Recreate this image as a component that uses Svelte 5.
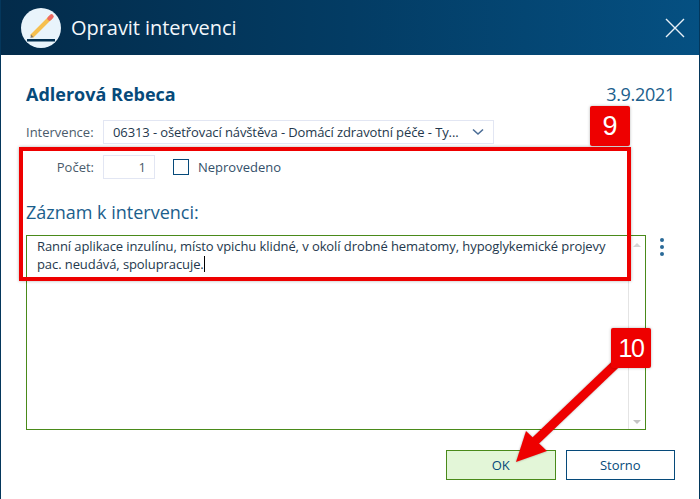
<script>
	// Form content
	const patient = 'Adlerová Rebeca';
	const date = '3.9.2021';
	const intervention = '06313 - ošetřovací návštěva - Domácí zdravotní péče - Ty...';
	const note = 'Ranní aplikace inzulínu, místo vpichu klidné, v okolí drobné hematomy, hypoglykemické projevy pac. neudává, spolupracuje.';
</script>

<div class="dialog">
	<header class="titlebar">
		<div class="title-left">
			<svg class="logo" width="40" height="40" viewBox="0 0 40 40">
				<circle cx="20" cy="20" r="20" fill="#e9f4fb" />
				<path d="M10.5 28.5 L30 9" stroke="#f6c04f" stroke-width="4" />
				<path d="M28.5 10.5 L30.5 8.5" stroke="#ee6a62" stroke-width="4.5" stroke-linecap="round" />
				<path d="M10 26.5 L12.5 29 L9.5 30 Z" fill="#8a7a66" />
				<rect x="6" y="31" width="28" height="2.5" fill="#032f4f" />
			</svg>
			<span class="title">Opravit intervenci</span>
		</div>
		<svg class="close" width="20" height="20" viewBox="0 0 20 20">
			<path d="M1 1 L19 19 M19 1 L1 19" stroke="#e8f0f6" stroke-width="1.4" fill="none" />
		</svg>
	</header>

	<main class="body">
		<div class="head-row">
			<span class="patient">{patient}</span>
			<span class="date">{date}</span>
		</div>

		<div class="field-row">
			<span class="label first">Intervence:</span>
			<div class="select">
				<span>{intervention}</span>
				<svg width="12" height="8" viewBox="0 0 12 8">
					<path d="M1 1.5 L6 6 L11 1.5" stroke="#4b6d96" stroke-width="1.6" fill="none" />
				</svg>
			</div>
		</div>

		<div class="count-row">
			<span class="label count">Počet:</span>
			<div class="number">1</div>
			<span class="checkbox"></span>
			<span class="check-label">Neprovedeno</span>
		</div>

		<h2 class="note-title">Záznam k intervenci:</h2>

		<div class="note-row">
			<div class="note">
				<p class="note-text">{note}<span class="caret"></span></p>
				<div class="scrollbar">
					<svg width="8" height="4" viewBox="0 0 8 4"><path d="M0 4 L4 0 L8 4 Z" fill="#d4d4d4" /></svg>
					<svg width="8" height="4" viewBox="0 0 8 4"><path d="M0 0 L4 4 L8 0 Z" fill="#c4c4c4" /></svg>
				</div>
			</div>
			<div class="dots">
				<span></span>
				<span></span>
				<span></span>
			</div>
		</div>

		<div class="buttons">
			<button class="btn ok">OK</button>
			<button class="btn">Storno</button>
		</div>
	</main>

	<!-- Annotations over the dialog -->
	<div class="mark-box"></div>
	<div class="badge nine">9</div>
	<svg class="arrow" width="700" height="499" viewBox="0 0 700 499">
		<path d="M620 360 L530 446" stroke="#ee0000" stroke-width="9" fill="none" />
		<path d="M516 462 L526 431 L547 451 Z" fill="#ee0000" />
	</svg>
	<div class="badge ten">10</div>
</div>

<style>
	:global(body) {
		margin: 0;
		background: #fff;
	}

	.dialog {
		position: relative;
		width: 700px;
		height: 499px;
		box-sizing: border-box;
		border-left: 1px solid #04375c;
		border-right: 1px solid #04375c;
		background: #fff;
		font-family: "Open Sans", sans-serif;
		overflow: hidden;
		display: flex;
		flex-direction: column;
	}

	.titlebar {
		height: 55px;
		flex-shrink: 0;
		margin: 0 -1px;
		padding: 0 15px 0 21px;
		display: flex;
		align-items: center;
		justify-content: space-between;
		background: linear-gradient(90deg, #032b4a 0%, #033c64 50%, #055082 100%);
	}

	.title-left {
		display: flex;
		align-items: center;
		gap: 10px;
	}

	.title {
		color: #f2f7fb;
		font-size: 20px;
		line-height: 27px;
		letter-spacing: -0.05px;
	}

	.logo {
		display: block;
	}

	.body {
		padding: 0 24px 0 25px;
		display: flex;
		flex-direction: column;
	}

	.head-row {
		margin-top: 26px;
		height: 26px;
		display: flex;
		justify-content: space-between;
		align-items: center;
	}

	.patient {
		font-size: 18px;
		font-weight: 700;
		color: #064a7a;
	}

	.date {
		font-size: 18px;
		letter-spacing: -0.3px;
		color: #1b5e8c;
	}

	.field-row {
		margin-top: 13px;
		display: flex;
		align-items: center;
	}

	.label {
		font-size: 13px;
		color: #4a5b6b;
	}

	.label.first {
		width: 77px;
	}

	.select {
		width: 391px;
		height: 24px;
		box-sizing: border-box;
		border: 1px solid #e2e6f3;
		padding: 0 9px;
		display: flex;
		align-items: center;
		justify-content: space-between;
		font-size: 13px;
		letter-spacing: -0.1px;
		color: #24384d;
	}

	.count-row {
		margin-top: 11px;
		height: 24px;
		display: flex;
		align-items: center;
	}

	.label.count {
		width: 68px;
		text-align: right;
		margin-right: 9px;
	}

	.number {
		width: 52px;
		height: 24px;
		box-sizing: border-box;
		border: 1px solid #e2e6f3;
		padding-right: 8px;
		text-align: right;
		font-size: 13px;
		line-height: 22px;
		color: #4a5b6b;
	}

	.checkbox {
		width: 16px;
		height: 16px;
		box-sizing: border-box;
		border: 1px solid #064a7a;
		margin-left: 18px;
		margin-right: 9px;
	}

	.check-label {
		font-size: 13px;
		color: #34506a;
	}

	.note-title {
		margin: 21px 0 0;
		font-size: 18px;
		line-height: 25px;
		font-weight: 400;
		color: #1b5e8c;
	}

	.note-row {
		margin-top: 10px;
		display: flex;
	}

	.note {
		width: 620px;
		height: 195px;
		box-sizing: border-box;
		border: 1px solid #4a8a1a;
		display: flex;
		justify-content: space-between;
	}

	.note-text {
		margin: 0;
		width: 592px;
		padding: 1px 0 0 10px;
		box-sizing: border-box;
		font-size: 13px;
		line-height: 18px;
		letter-spacing: -0.085px;
		color: #24384d;
	}

	.caret {
		display: inline-block;
		width: 1px;
		height: 16px;
		background: #000;
		vertical-align: -3px;
	}

	.scrollbar {
		width: 16px;
		border-left: 1px solid #e4e4e4;
		padding: 7px 0 5px;
		display: flex;
		flex-direction: column;
		justify-content: space-between;
		align-items: center;
	}

	.scrollbar svg {
		display: block;
	}

	.dots {
		margin: 3px 0 0 14px;
		display: flex;
		flex-direction: column;
		gap: 3px;
	}

	.dots span {
		width: 4px;
		height: 4px;
		border-radius: 50%;
		background: #2a6a98;
	}

	.buttons {
		margin-top: 20px;
		padding-left: 420px;
		display: flex;
		gap: 10px;
	}

	.btn {
		width: 110px;
		height: 30px;
		box-sizing: border-box;
		background: #fff;
		border: 1px solid #064a7a;
		font-family: inherit;
		font-size: 13px;
		color: #064a7a;
		padding: 0;
	}

	.btn.ok {
		background: #e3f6d8;
		border-color: #4a8a1a;
	}

	.mark-box {
		position: absolute;
		left: 18px;
		top: 147px;
		width: 612px;
		height: 134px;
		box-sizing: border-box;
		border: 4px solid #ee0000;
		box-shadow: 0 0 3px rgba(0, 0, 0, 0.3);
	}

	.badge {
		position: absolute;
		width: 40px;
		height: 40px;
		border-radius: 2px;
		background: #ee0000;
		color: #fff;
		font-family: "Liberation Sans", sans-serif;
		font-size: 27px;
		line-height: 40px;
		text-align: center;
		box-shadow: 0 0 3px rgba(0, 0, 0, 0.3);
	}

	.badge.nine {
		left: 589px;
		top: 106px;
	}

	.badge.ten {
		left: 610px;
		top: 328px;
		letter-spacing: -1.5px;
		font-size: 25px;
	}

	.arrow {
		position: absolute;
		left: -1px;
		top: 0;
		filter: drop-shadow(0 0 1px rgba(0, 0, 0, 0.3));
	}
</style>
